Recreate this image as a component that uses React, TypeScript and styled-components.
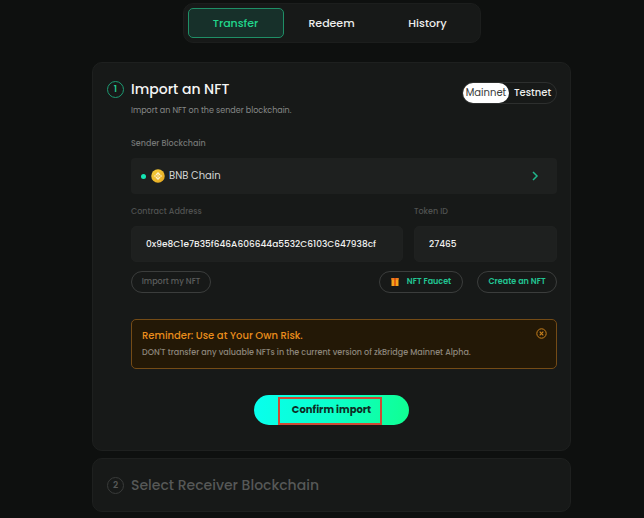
import React, { useState } from 'react';
import styled, { createGlobalStyle } from 'styled-components';

const GlobalStyle = createGlobalStyle`
  *, *::before, *::after { box-sizing: border-box; }
  body {
    margin: 0;
    background: #0e100f;
    color: #f2f3f2;
    font-family: Poppins, Inter, sans-serif;
    font-size: 10px;
    line-height: 16px;
  }
  button, input { font: inherit; color: inherit; margin: 0; }
  button { cursor: pointer; }
  h2, p { margin: 0; }
`;

const Page = styled.main`
  display: flex;
  flex-direction: column;
  align-items: center;
  padding: 3px 0 6px 19px;
`;

const Tabs = styled.nav`
  display: grid;
  grid-template-columns: repeat(3, 96px);
  padding: 4px;
  border: 1px solid #1c1e1d;
  border-radius: 10px;
  background: #171918;
`;

const Tab = styled.button<{ $active: boolean }>`
  height: 30px;
  padding: 0;
  border: 1px solid ${(p) => (p.$active ? '#1f8f66' : 'transparent')};
  border-radius: 5px;
  background: ${(p) => (p.$active ? '#17302a' : 'transparent')};
  color: ${(p) => (p.$active ? '#21d68c' : '#eceeed')};
  font-size: 11px;
  font-weight: 500;
`;

const Steps = styled.div`
  display: grid;
  gap: 7px;
  width: 100%;
  max-width: 479px;
  margin-top: 19px;
`;

const Card = styled.section<{ $compact?: boolean }>`
  display: grid;
  grid-template-columns: 17px minmax(0, 1fr);
  column-gap: 7px;
  padding: ${(p) => (p.$compact ? '15px 13px 15px 14px' : '15px 13px 25px 14px')};
  border: 1px solid #1e201f;
  border-radius: 10px;
  background: #171918;
`;

const StepNumber = styled.span<{ $active?: boolean }>`
  display: grid;
  place-items: center;
  width: 17px;
  height: 17px;
  margin-top: 3px;
  border: 1px solid ${(p) => (p.$active ? '#1d9a72' : '#393b3a')};
  border-radius: 50%;
  color: ${(p) => (p.$active ? '#23c78f' : '#565857')};
  font-size: 9px;
  font-weight: 600;
  line-height: 15px;
`;

const CardHead = styled.div`
  display: flex;
  justify-content: space-between;
  align-items: flex-start;
`;

const Title = styled.h2<{ $muted?: boolean }>`
  color: ${(p) => (p.$muted ? '#565857' : '#f4f5f4')};
  font-size: 14px;
  font-weight: 500;
  line-height: 22px;
`;

const Subtitle = styled.p`
  margin-top: 3px;
  color: #868887;
  font-size: 8px;
`;

const NetworkSwitch = styled.div`
  display: flex;
  margin-top: 4px;
  border: 1px solid #2d2f2e;
  border-radius: 11px;
`;

const NetworkOption = styled.button<{ $active: boolean }>`
  width: ${(p) => (p.$active ? '46px' : '47px')};
  height: 20px;
  padding: 0;
  border: 0;
  border-radius: 10px;
  background: ${(p) => (p.$active ? '#ffffff' : 'transparent')};
  color: ${(p) => (p.$active ? '#3a3c3b' : '#eceeed')};
  font-weight: ${(p) => (p.$active ? 400 : 500)};
`;

const Field = styled.div`
  display: flex;
  flex-direction: column;
  gap: 6px;
`;

const Label = styled.label<{ $dim?: boolean }>`
  align-self: flex-start;
  color: ${(p) => (p.$dim ? '#505251' : '#747675')};
  font-size: 8px;
  font-weight: 500;
`;

const ChainButton = styled.button`
  display: flex;
  align-items: center;
  height: 36px;
  padding: 0 18px 0 10px;
  border: 0;
  border-radius: 4px;
  background: #1e201f;
  color: #d2d4d3;
`;

const Dot = styled.span`
  width: 5px;
  height: 5px;
  margin-right: 5px;
  border-radius: 50%;
  background: #14e6b4;
`;

const ChainName = styled.span`
  flex: 1;
  margin-left: 4px;
  text-align: left;
`;

const ChainField = styled(Field)`
  margin-top: 17px;
`;

const TokenFields = styled.div`
  display: grid;
  grid-template-columns: minmax(0, 272fr) minmax(0, 143fr);
  gap: 11px;
  margin-top: 10px;
`;

const Input = styled.input`
  width: 100%;
  height: 36px;
  padding: 0 14px;
  border: 1px solid #1f2120;
  border-radius: 5px;
  background: #1e201f;
  color: #f0f1f0;
  font-size: 9px;
  font-weight: 500;
  outline: none;
`;

const Actions = styled.div`
  display: flex;
  align-items: center;
  margin-top: 9px;
`;

const Pill = styled.button<{ $dim?: boolean }>`
  display: flex;
  align-items: center;
  justify-content: center;
  width: 80px;
  height: 22px;
  padding: 0;
  border: 1px solid #3b3d3c;
  border-radius: 11px;
  background: transparent;
  color: ${(p) => (p.$dim ? '#5c5e5d' : '#22c593')};
  font-size: 8px;
  font-weight: ${(p) => (p.$dim ? 500 : 600)};
`;

const FaucetPill = styled(Pill)`
  gap: 8px;
  width: 84px;
  margin: 0 14px 0 auto;
`;

const Notice = styled.aside`
  display: flex;
  justify-content: space-between;
  align-items: flex-start;
  margin-top: 26px;
  padding: 7px 9px 7px 10px;
  border: 1px solid #744b16;
  border-radius: 5px;
  background: #231806;
`;

const NoticeTitle = styled.p`
  color: #e98d1c;
  font-weight: 500;
  line-height: 18px;
`;

const NoticeText = styled.p`
  color: #8d867b;
  font-size: 8px;
  font-weight: 500;
`;

const CloseButton = styled.button`
  display: flex;
  margin-top: 1px;
  padding: 0;
  border: 0;
  background: transparent;
  color: #c9811c;
`;

const Submit = styled.button`
  position: relative;
  display: block;
  width: 155px;
  height: 30px;
  margin: 26px auto 0 123px;
  padding: 0;
  border: 0;
  border-radius: 15px;
  background: linear-gradient(100deg, #08ffee 0%, #0cffcb 50%, #10ff91 100%);
  color: #0d2e25;
  font-weight: 700;
`;

const Highlight = styled.span`
  position: absolute;
  inset: 2px 27px 0 24px;
  border: 2px solid #cf4a36;
`;

const BnbLogo = () => (
  <svg width="14" height="14" viewBox="0 0 28 28" aria-hidden="true">
    <defs>
      <linearGradient id="gold" x1="0" y1="0" x2="1" y2="1">
        <stop offset="0" stopColor="#f6cf3c" />
        <stop offset="1" stopColor="#e3a51f" />
      </linearGradient>
    </defs>
    <circle cx="14" cy="14" r="13.5" fill="url(#gold)" />
    <g fill="#fdf1c8">
      <path d="M14 6l5 5-2 2-3-3-3 3-2-2z" />
      <path d="M14 22l5-5-2-2-3 3-3-3-2 2z" />
      <path d="M8 12l2 2-2 2-2-2z" />
      <path d="M20 12l2 2-2 2-2-2z" />
      <path d="M14 12l2 2-2 2-2-2z" />
    </g>
  </svg>
);

const Chevron = () => (
  <svg width="8" height="10" viewBox="0 0 8 10" fill="none" stroke="#20b78c" strokeWidth="1.5" aria-hidden="true">
    <path d="M2 1l4 4-4 4" />
  </svg>
);

const Gift = () => (
  <svg width="8" height="8" viewBox="0 0 8 8" aria-hidden="true">
    <path d="M0.5 0h7v8h-7z" fill="#f5a31a" />
    <path d="M0.5 0h7v1.8h-7z" fill="#f07b1c" />
    <path d="M3.3 0h1.4v8H3.3z" fill="#d3420f" />
  </svg>
);

const CloseIcon = () => (
  <svg width="11" height="11" viewBox="0 0 11 11" fill="none" stroke="currentColor" aria-hidden="true">
    <circle cx="5.5" cy="5.5" r="4.7" />
    <path d="M3.7 3.7l3.6 3.6M7.3 3.7L3.7 7.3" strokeWidth="1.2" />
  </svg>
);

const tabs = ['Transfer', 'Redeem', 'History'];
const networks = ['Mainnet', 'Testnet'];

export default function App() {
  const [tab, setTab] = useState('Transfer');
  const [network, setNetwork] = useState('Mainnet');
  const [address, setAddress] = useState('0x9e8C1e7B35f646A606644a5532C6103C647938cf');
  const [tokenId, setTokenId] = useState('27465');
  const [noticeOpen, setNoticeOpen] = useState(true);

  return (
    <>
      <GlobalStyle />
      <Page>
        <Tabs>
          {tabs.map((name) => (
            <Tab key={name} $active={name === tab} onClick={() => setTab(name)}>
              {name}
            </Tab>
          ))}
        </Tabs>
        <Steps>
          <Card>
            <StepNumber $active>1</StepNumber>
            <div>
              <CardHead>
                <div>
                  <Title>Import an NFT</Title>
                  <Subtitle>Import an NFT on the sender blockchain.</Subtitle>
                </div>
                <NetworkSwitch>
                  {networks.map((name) => (
                    <NetworkOption key={name} $active={name === network} onClick={() => setNetwork(name)}>
                      {name}
                    </NetworkOption>
                  ))}
                </NetworkSwitch>
              </CardHead>
              <ChainField>
                <Label htmlFor="chain">Sender Blockchain</Label>
                <ChainButton id="chain">
                  <Dot />
                  <BnbLogo />
                  <ChainName>BNB Chain</ChainName>
                  <Chevron />
                </ChainButton>
              </ChainField>
              <TokenFields>
                <Field>
                  <Label $dim htmlFor="address">Contract Address</Label>
                  <Input id="address" value={address} onChange={(e) => setAddress(e.target.value)} />
                </Field>
                <Field>
                  <Label $dim htmlFor="token">Token ID</Label>
                  <Input id="token" value={tokenId} onChange={(e) => setTokenId(e.target.value)} />
                </Field>
              </TokenFields>
              <Actions>
                <Pill $dim>Import my NFT</Pill>
                <FaucetPill>
                  <Gift />
                  NFT Faucet
                </FaucetPill>
                <Pill>Create an NFT</Pill>
              </Actions>
              {noticeOpen && (
                <Notice>
                  <div>
                    <NoticeTitle>Reminder: Use at Your Own Risk.</NoticeTitle>
                    <NoticeText>
                      DON'T transfer any valuable NFTs in the current version of zkBridge Mainnet Alpha.
                    </NoticeText>
                  </div>
                  <CloseButton aria-label="Close" onClick={() => setNoticeOpen(false)}>
                    <CloseIcon />
                  </CloseButton>
                </Notice>
              )}
              <Submit>
                Confirm import
                <Highlight />
              </Submit>
            </div>
          </Card>
          <Card $compact>
            <StepNumber>2</StepNumber>
            <Title $muted>Select Receiver Blockchain</Title>
          </Card>
        </Steps>
      </Page>
    </>
  );
}
